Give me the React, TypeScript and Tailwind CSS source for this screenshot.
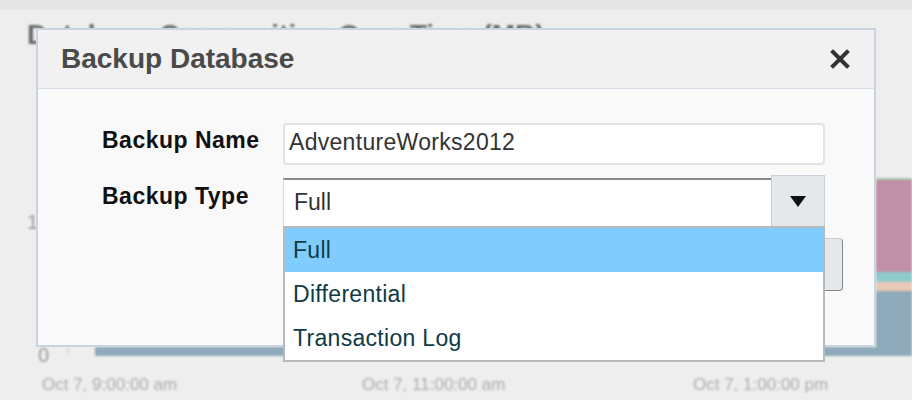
import React from 'react'

const options = ['Full', 'Differential', 'Transaction Log']

function CloseIcon() {
  return (
    <svg width="20" height="20" viewBox="0 0 20 20" className="text-[#333]">
      <path d="M3 3 L17 17 M17 3 L3 17" stroke="currentColor" strokeWidth="4" strokeLinecap="square" />
    </svg>
  )
}

function ChartBackground() {
  return (
    <div className="flex h-full flex-col">
      {/* top strip */}
      <div className="h-[10px] bg-[#e6e6e6]" />

      <div className="flex flex-1 flex-col pl-[25px] blur-[1.2px]">
        <div className="ml-[2px] mt-[11px] text-[28px] font-bold leading-none text-[#6a6a6a]">
          Database Composition Over Time (MB)
        </div>

        {/* chart */}
        <div className="mt-[129px] flex h-[188px]">
          <div className="flex w-[70px] flex-col text-[20px] leading-none text-[#9a9a9a]">
            <span className="ml-[2px] mt-[34px]">1</span>
            <div className="mt-auto mb-[1px] flex items-end">
              <span className="ml-[13px]">0</span>
              <span className="mb-[10px] ml-[18px] h-[8px] w-[1px] bg-[#d0d0d0]" />
            </div>
          </div>
          <div className="flex flex-1 items-end pb-[10px]">
            <div className="h-[9px] flex-1 bg-[#8ea9ba]" />
            <div className="flex h-[178px] w-[36px] flex-col">
              <div className="h-[2px] bg-[#a9c9a9]" />
              <div className="h-[92px] bg-[#c090a8]" />
              <div className="h-[10px] bg-[#8fcbcb]" />
              <div className="h-[9px] bg-[#e8c9b5]" />
              <div className="flex-1 bg-[#8ea9ba]" />
            </div>
          </div>
        </div>

        {/* x labels */}
        <div className="ml-[17px] mt-[10px] flex text-[17px] leading-none text-[#adadad]">
          <span className="w-[320px]">Oct 7, 9:00:00 am</span>
          <span className="w-[331px]">Oct 7, 11:00:00 am</span>
          <span>Oct 7, 1:00:00 pm</span>
        </div>
      </div>
    </div>
  )
}

export default function App() {
  return (
    <div className="relative h-[400px] w-[912px] overflow-hidden bg-[#eeeeee] font-['Liberation_Sans',Arial,sans-serif]">
      <ChartBackground />

      {/* Dialog */}
      <div className="absolute left-[36px] top-[28px] flex h-[319px] w-[840px] flex-col border-2 border-[#c9d4e2] bg-[#f9f9f9]">
        {/* Header */}
        <div className="flex h-[59px] items-center justify-between border-b border-[#d5dde8] bg-[#f1f1f1] pl-[23px] pr-[24px]">
          <h2 className="text-[28px] font-bold leading-none text-[#4a4a4a]">Backup Database</h2>
          <CloseIcon />
        </div>

        {/* Body */}
        <div className="flex flex-col pl-[64px] pt-[34px]">
          <div className="flex">
            <label className="mt-[6px] w-[181px] text-[23px] font-bold leading-none tracking-[0.5px] text-[#111]">
              Backup Name
            </label>
            <div className="flex h-[42px] w-[542px] items-center rounded-[4px] border-2 border-[#dfe3e7] bg-white pb-[3px] pl-[4px] text-[23px] leading-none tracking-[0.3px] text-[#333]">
              AdventureWorks2012
            </div>
          </div>

          <div className="mt-[10px] flex">
            <label className="mt-[10px] w-[181px] text-[23px] font-bold leading-none tracking-[0.5px] text-[#111]">
              Backup Type
            </label>
            <div className="relative flex h-[52px] w-[542px]">
              <div className="mt-[3px] flex h-[48px] flex-1 items-center border-l border-t-2 border-l-[#d8d8d8] border-t-[#8a8a8a] bg-white pb-[2px] pl-[10px] text-[23px] leading-none text-[#333]">
                Full
              </div>
              <div className="flex h-[52px] w-[54px] items-center justify-center border border-[#c7d0da] bg-[#e5e8eb]">
                <svg width="16" height="11" viewBox="0 0 16 11">
                  <polygon points="0,0 16,0 8,11" fill="#111" />
                </svg>
              </div>

              {/* dropdown menu */}
              <ul className="absolute left-0 top-[51px] z-10 w-[542px] border-2 border-[#b6babe] bg-white">
                {options.map((opt, i) => (
                  <li
                    key={opt}
                    className={
                      'flex h-[44px] items-center pl-[8px] text-[23px] leading-none tracking-[0.3px] text-[#0f3b45] ' +
                      (i === 0 ? 'bg-[#80ccff]' : '')
                    }
                  >
                    {opt}
                  </li>
                ))}
              </ul>
            </div>
          </div>

          {/* footer button, mostly hidden by the menu */}
          <div className="mt-[11px] flex justify-end pr-[31px]">
            <button className="h-[53px] w-[110px] rounded-[4px] border border-[#c5ccd3] border-b-[#80868c] border-r-[#80868c] bg-[#e6e9ec]">
              Backup
            </button>
          </div>
        </div>
      </div>
    </div>
  )
}
